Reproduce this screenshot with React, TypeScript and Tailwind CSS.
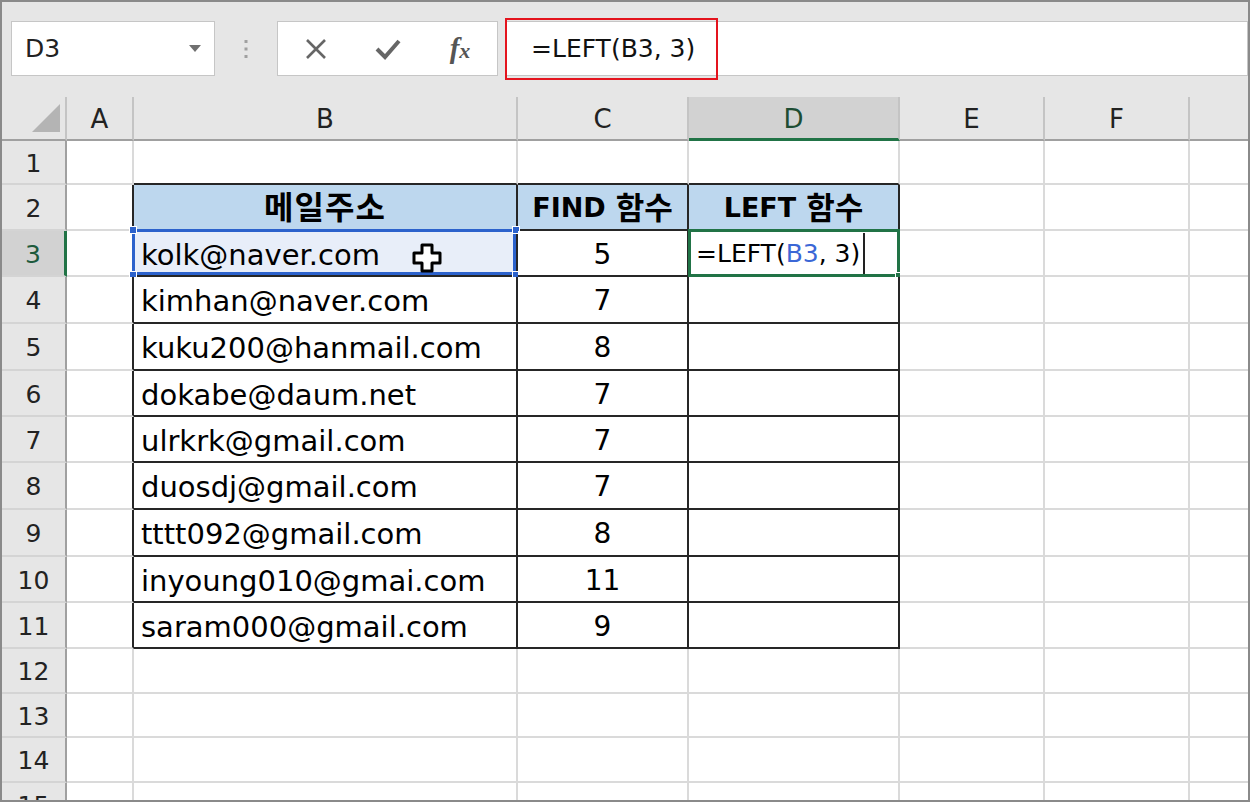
const EMAILS = [
  "kolk@naver.com",
  "kimhan@naver.com",
  "kuku200@hanmail.com",
  "dokabe@daum.net",
  "ulrkrk@gmail.com",
  "duosdj@gmail.com",
  "tttt092@gmail.com",
  "inyoung010@gmai.com",
  "saram000@gmail.com",
];
const FINDS = [5, 7, 8, 7, 7, 7, 8, 11, 9];

// row heights (rows 1..15), measured off the screenshot
const ROW_H = [44, 46, 46, 47, 47, 46, 46, 47, 47, 46, 46, 45, 44, 45, 45];
const H: Record<number, string> = {
  44: "h-[44px] grid-rows-[44px]",
  45: "h-[45px] grid-rows-[45px]",
  46: "h-[46px] grid-rows-[46px]",
  47: "h-[47px] grid-rows-[47px]",
};

const COLS = ["A", "B", "C", "D", "E", "F", ""];
const GRID = "grid grid-cols-[65px_67px_384px_171px_211px_145px_145px_58px]";

function TopBar() {
  return (
    <div className="flex h-[95px] items-start pl-[9px] pt-[19px]">
      <div className="flex h-[55px] w-[204px] items-center justify-between border border-[#c6c6c6] bg-white pl-[13px] pr-[13px]">
        <span className="text-[25px] text-[#222]">D3</span>
        <svg width="12" height="7" viewBox="0 0 12 7">
          <path d="M0 0 H12 L6 7 Z" fill="#707070" />
        </svg>
      </div>
      <div className="flex h-[55px] w-[62px] items-center justify-center">
        <svg width="4" height="18" viewBox="0 0 4 18">
          <rect x="0.5" y="0" width="3" height="3" fill="#a0a0a0" />
          <rect x="0.5" y="7.5" width="3" height="3" fill="#a0a0a0" />
          <rect x="0.5" y="15" width="3" height="3" fill="#a0a0a0" />
        </svg>
      </div>
      <div className="flex h-[55px] w-[221px] items-center border border-[#c6c6c6] bg-white">
        <div className="flex w-[74px] justify-center pl-[2px]">
          <svg width="22" height="20" viewBox="0 0 22 20">
            <path d="M2 1 L20 19 M20 1 L2 19" stroke="#666" strokeWidth="2.6" />
          </svg>
        </div>
        <div className="flex w-[72px] justify-center">
          <svg width="26" height="22" viewBox="0 0 26 22">
            <path d="M2 11 L10 19 L24 3" stroke="#666" strokeWidth="4" fill="none" />
          </svg>
        </div>
        <div className="flex w-[72px] justify-center">
          <span className="font-['Liberation_Serif',serif] text-[29px] font-bold italic leading-none text-[#555]">
            f<span className="text-[22px]">x</span>
          </span>
        </div>
      </div>
      <div className="ml-[7px] flex h-[55px] flex-1 items-center border border-[#c6c6c6] bg-white">
        <div className="-ml-px flex h-[62px] w-[213px] items-center border-2 border-[#e4141e] pl-[24px]">
          <span className="text-[25px] text-[#111]">=LEFT(B3, 3)</span>
        </div>
      </div>
    </div>
  );
}

function HeaderRow() {
  return (
    <div className={`${GRID} h-[44px] grid-rows-[44px]`}>
      <div className="flex items-end justify-end border-b-2 border-r-2 border-b-[#a0a0a0] border-r-[#c4c4c4] bg-[#e6e6e6] pb-[7px] pr-[5px]">
        <svg width="28" height="28" viewBox="0 0 28 28">
          <path d="M28 0 V28 H0 Z" fill="#b4b4b4" />
        </svg>
      </div>
      {COLS.map((c, i) =>
        c === "D" ? (
          <div
            key={i}
            className="flex items-center justify-center border-b-[3px] border-r-2 border-b-[#217346] border-r-[#c4c4c4] bg-[#d2d2d2] pt-[2px] text-[26px] text-[#1d4d33]"
          >
            {c}
          </div>
        ) : (
          <div
            key={i}
            className={`flex items-center justify-center border-b-2 border-b-[#a0a0a0] bg-[#e6e6e6] pt-[2px] text-[26px] text-[#222] ${
              c === "" ? "" : "border-r-2 border-r-[#c4c4c4]"
            }`}
          >
            {c}
          </div>
        )
      )}
    </div>
  );
}

function Cell({ r, c }: { r: number; c: number }) {
  const inTable = r >= 2 && r <= 11 && c >= 1 && c <= 3;
  const rightDark = inTable || (c === 0 && r >= 2 && r <= 11);
  const bottomDark = inTable || (r === 1 && c >= 1 && c <= 3);
  const right = c === 6 ? "" : rightDark ? "border-r-2 border-r-[#262626]" : "border-r-2 border-r-[#dadada]";
  const bottom = bottomDark ? "border-b-2 border-b-[#262626]" : "border-b-2 border-b-[#dadada]";
  const base = `relative flex min-h-0 items-center ${right} ${bottom}`;

  if (r === 2 && inTable) {
    const label = c === 1 ? null : c === 2 ? "FIND" : "LEFT";
    return (
      <div className={`${base} justify-center bg-[#bdd7ee] pt-[2px] font-bold text-black`}>
        {label ? (
          <>
            <span className="text-[27px]">{label}</span>
            <span className="ml-[10px] text-[31px]">함수</span>
          </>
        ) : (
          <span className="text-[32px] tracking-[1px]">메일주소</span>
        )}
      </div>
    );
  }

  if (r >= 3 && r <= 11 && c === 1) {
    const sel = r === 3;
    return (
      <div className={`${base} pl-[7px] pt-[3px] text-[29px] text-black ${sel ? "bg-[#e8eef9]" : "bg-white"}`}>
        {EMAILS[r - 3]}
        {sel && (
          <>
            <div className="absolute -left-[2px] -top-[2px] bottom-0 right-0 border-[3px] border-[#2c62cc]" />
            <div className="absolute -left-[5px] -top-[5px] h-[8px] w-[8px] border border-white bg-[#2c62cc]" />
            <div className="absolute -right-[4px] -top-[5px] h-[8px] w-[8px] border border-white bg-[#2c62cc]" />
            <div className="absolute -bottom-[4px] -left-[5px] h-[8px] w-[8px] border border-white bg-[#2c62cc]" />
            <div className="absolute -bottom-[4px] -right-[4px] h-[8px] w-[8px] border border-white bg-[#2c62cc]" />
            <svg className="absolute left-[278px] top-[12px]" width="30" height="30" viewBox="0 0 30 30">
              <path
                d="M10 2 H20 V10 H28 V20 H20 V28 H10 V20 H2 V10 H10 Z"
                fill="white"
                stroke="black"
                strokeWidth="3"
                strokeLinejoin="round"
              />
            </svg>
          </>
        )}
      </div>
    );
  }

  if (r >= 3 && r <= 11 && c === 2) {
    return <div className={`${base} justify-center bg-white pt-[3px] text-[28px] text-black`}>{FINDS[r - 3]}</div>;
  }

  if (r === 3 && c === 3) {
    return (
      <div className={`${base} bg-white pl-[7px] pt-[2px] text-[25px] text-black`}>
        <span>
          =LEFT(<span className="text-[#3b67d6]">B3</span>, 3)
        </span>
        <span className="ml-[3px] h-[42px] w-[2px] bg-[#222]" />
        <div className="absolute -left-px -top-[2px] -bottom-[2px] -right-[2px] border-[3px] border-[#217346]" />
        <div className="absolute -bottom-[5px] -right-[5px] h-[8px] w-[8px] border border-white bg-[#217346]" />
      </div>
    );
  }

  return <div className={`${base} bg-white`} />;
}

function Row({ r }: { r: number }) {
  const h = H[ROW_H[r - 1]];
  const active = r === 3;
  return (
    <div className={`${GRID} ${h}`}>
      <div
        className={`flex items-center justify-center border-b-2 border-b-[#d4d4d4] pt-[3px] text-[25px] ${
          active
            ? "border-r-[3px] border-r-[#217346] bg-[#d2d2d2] text-[#1d5a3c]"
            : "border-r-2 border-r-[#a0a0a0] bg-[#e6e6e6] text-[#222]"
        }`}
      >
        {r}
      </div>
      {COLS.map((_, c) => (
        <Cell key={c} r={r} c={c} />
      ))}
    </div>
  );
}

export default function App() {
  return (
    <div className="h-[802px] w-[1250px] overflow-hidden border-2 border-[#8a8a8a] bg-[#e6e6e6] font-['DejaVu_Sans','Noto_Sans_CJK_KR',sans-serif] leading-[34px]">
      <TopBar />
      <div className="h-[703px] overflow-hidden">
        <HeaderRow />
        {ROW_H.map((_, i) => (
          <Row key={i} r={i + 1} />
        ))}
      </div>
    </div>
  );
}
